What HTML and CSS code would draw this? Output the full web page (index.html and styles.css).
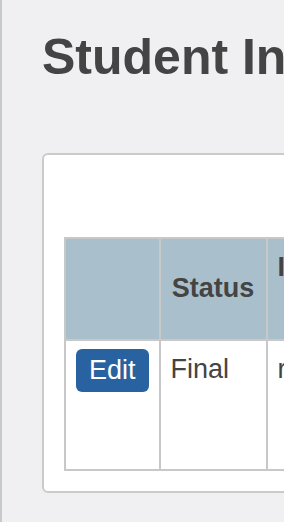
FILE: index.html
```html
<!DOCTYPE html>
<html lang="en">
<head>
    <meta charset="UTF-8">
    <meta name="viewport" content="width=device-width, initial-scale=1.0">
    <title>Student Information</title>
    <link rel="stylesheet" href="styles.css">
</head>
<body>
    <div class="page">
        <h1>Student Information</h1>
        <div class="card">
            <table class="records">
                <thead>
                    <tr>
                        <th class="col-action"></th>
                        <th class="col-status">Status</th>
                        <th class="col-notes">Instructor Notes</th>
                        <th>Last Updated</th>
                    </tr>
                </thead>
                <tbody>
                    <tr class="data-row">
                        <td><button type="button" class="btn-edit">Edit</button></td>
                        <td>Final</td>
                        <td>reviewed</td>
                        <td>09/14/2023</td>
                    </tr>
                </tbody>
            </table>
        </div>
    </div>
</body>
</html>
```

FILE: styles.css
```css
html, body {
    margin: 0;
    overflow: hidden;
}

body {
    font-family: "Liberation Sans", Arial, sans-serif;
    background-color: #f0f0f2;
    color: #444;
}

.page {
    border-left: 2px solid #c6cacd;
    padding: 28px 0 0 40px;
    min-height: 100vh;
    box-sizing: border-box;
    width: 1000px;
}

h1 {
    margin: 0;
    font-size: 50px;
    font-weight: bold;
    color: #444;
}

.card {
    margin-top: 67px;
    width: 900px;
    background: #fff;
    border: 2px solid #cbcbcb;
    border-radius: 6px;
    padding: 82px 20px 20px;
}

.records {
    border-collapse: collapse;
    font-size: 27px;
    line-height: 1.55;
}

.records th,
.records td {
    border: 2px solid #c8c8c8;
    padding: 8px 10px;
}

.records th {
    background-color: #a9bfcb;
    font-weight: bold;
    text-align: center;
    vertical-align: middle;
    height: 83px;
}

.records td {
    vertical-align: top;
    padding-top: 8px;
}

.col-action {
    width: 72px;
}

.col-status {
    width: 85px;
}

.col-notes {
    width: 1px;
}

.data-row td {
    height: 112px;
}

.btn-edit {
    display: inline-block;
    font-family: inherit;
    font-size: 27px;
    line-height: 31px;
    padding: 6px 13px;
    color: #fff;
    background-color: #2962a0;
    border: none;
    border-radius: 6px;
    cursor: pointer;
}
```
